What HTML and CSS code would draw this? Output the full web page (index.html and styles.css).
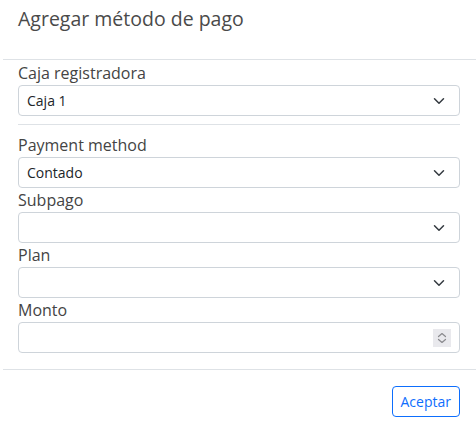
FILE: index.html
```html
<!DOCTYPE html>
<html lang="es">
<head>
<meta charset="utf-8">
<title>Agregar método de pago</title>
<link rel="stylesheet" href="styles.css">
</head>
<body>
<div class="modal">
  <div class="modal-header">
    <h5 class="modal-title">Agregar método de pago</h5>
  </div>
  <div class="modal-body">
    <div class="field">
      <label class="field-label">Caja registradora</label>
      <div class="control">
        <span class="control-value">Caja 1</span>
        <svg class="chevron" width="16" height="12" viewBox="0 0 16 16"><path d="m2 5 6 6 6-6" fill="none" stroke="#343a40" stroke-width="2" stroke-linecap="round" stroke-linejoin="round"/></svg>
      </div>
    </div>
    <div class="divider"></div>
    <div class="field">
      <label class="field-label">Payment method</label>
      <div class="control">
        <span class="control-value">Contado</span>
        <svg class="chevron" width="16" height="12" viewBox="0 0 16 16"><path d="m2 5 6 6 6-6" fill="none" stroke="#343a40" stroke-width="2" stroke-linecap="round" stroke-linejoin="round"/></svg>
      </div>
    </div>
    <div class="field">
      <label class="field-label">Subpago</label>
      <div class="control">
        <span class="control-value"></span>
        <svg class="chevron" width="16" height="12" viewBox="0 0 16 16"><path d="m2 5 6 6 6-6" fill="none" stroke="#343a40" stroke-width="2" stroke-linecap="round" stroke-linejoin="round"/></svg>
      </div>
    </div>
    <div class="field">
      <label class="field-label">Plan</label>
      <div class="control">
        <span class="control-value"></span>
        <svg class="chevron" width="16" height="12" viewBox="0 0 16 16"><path d="m2 5 6 6 6-6" fill="none" stroke="#343a40" stroke-width="2" stroke-linecap="round" stroke-linejoin="round"/></svg>
      </div>
    </div>
    <div class="field">
      <label class="field-label">Monto</label>
      <div class="control control-number">
        <span class="control-value"></span>
        <span class="spinner">
          <svg width="18" height="18" viewBox="0 0 18 18"><path d="M5.5 7.5 9 4.5l3.5 3M5.5 10.5 9 13.5l3.5-3" fill="none" stroke="#8a8a8e" stroke-width="1.2" stroke-linecap="round" stroke-linejoin="round"/></svg>
        </span>
      </div>
    </div>
  </div>
  <div class="modal-footer">
    <button class="btn-outline" type="button">Aceptar</button>
  </div>
</div>
</body>
</html>
```
FILE: styles.css
```css
html, body {
  margin: 0;
  padding: 0;
  background: #fff;
}
body {
  font-family: "Open Sans", "Noto Sans", sans-serif;
  color: #212529;
}
.modal {
  margin-left: 3px;
  width: 473px;
}
.modal-header {
  height: 60px;
  box-sizing: border-box;
  padding: 4px 15px 0;
  border-bottom: 1px solid #dee2e6;
}
.modal-title {
  margin: 0;
  font-size: 19.5px;
  line-height: 30px;
  font-weight: 400;
  color: #4a4a4a;
}
.modal-body {
  padding: 1px 16px 16px 15px;
  border-bottom: 1px solid #dee2e6;
}
.field {
  display: flex;
  flex-direction: column;
}
.field-label {
  font-size: 16px;
  line-height: 24px;
  color: #444;
}
.control {
  height: 31px;
  box-sizing: border-box;
  border: 1px solid #ced4da;
  border-radius: 4px;
  display: flex;
  align-items: center;
  padding: 0 12px 0 8px;
  font-size: 14px;
  line-height: 21px;
  color: #212529;
}
.control-value {
  flex: 1;
}
.chevron {
  display: block;
}
.control-number {
  padding-right: 8px;
}
.spinner {
  width: 18px;
  height: 18px;
  background: #e9e9ed;
  display: block;
}
.spinner svg {
  display: block;
}
.divider {
  height: 1px;
  background: #dee2e6;
  margin: 8px 0;
}
.modal-footer {
  display: flex;
  justify-content: flex-end;
  padding: 16px 16px 0 0;
}
.btn-outline {
  font-family: "Open Sans", "Noto Sans", sans-serif;
  font-size: 14px;
  line-height: 21px;
  padding: 4px 8px;
  border: 1px solid #0d6efd;
  border-radius: 4px;
  background: #fff;
  color: #0d6efd;
  cursor: pointer;
}
```
